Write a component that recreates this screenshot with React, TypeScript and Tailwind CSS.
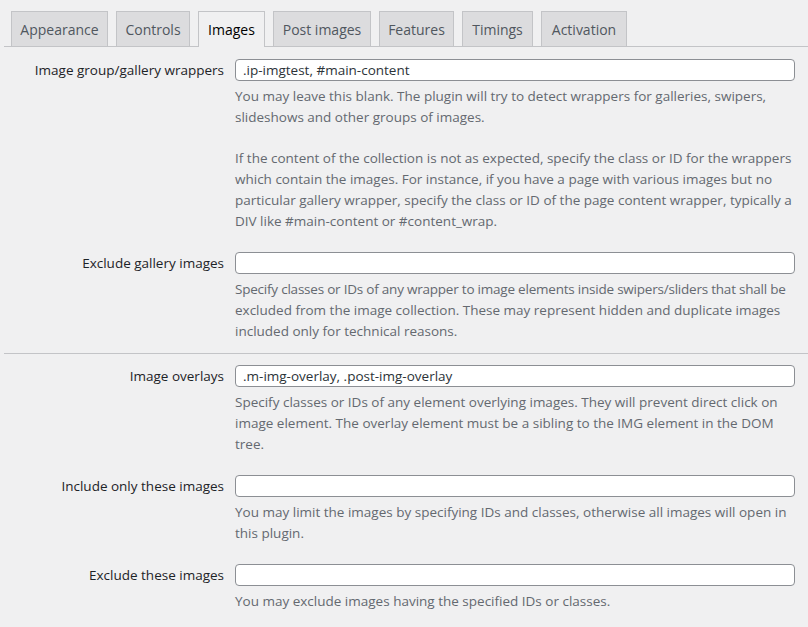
import React from 'react';

const tabs = [
  { label: 'Appearance', w: 'w-[97px]' },
  { label: 'Controls', w: 'w-[74px]' },
  { label: 'Images', w: 'w-[67px]', active: true },
  { label: 'Post images', w: 'w-[98px]' },
  { label: 'Features', w: 'w-[75px]' },
  { label: 'Timings', w: 'w-[71px]' },
  { label: 'Activation', w: 'w-[86px]' },
];

interface FieldProps {
  label: string;
  value?: string;
  lines: (string | null)[];
  tightLine?: number;
  className?: string;
}

// one settings row: right aligned label, input, description below
function Field({ label, value = '', lines, tightLine = -1, className = '' }: FieldProps) {
  return (
    <div className={`grid grid-cols-[235px_minmax(0,1fr)] ${className}`}>
      <div className="h-[22px] flex items-center justify-end pr-[11px] text-[#1d2327] whitespace-nowrap">
        {label}
      </div>
      <div className="pr-[13px] min-w-0">
        <input
          type="text"
          defaultValue={value}
          className="block w-full h-[22px] bg-white border border-[#8c8f94] rounded-[4px] px-[7px] text-[#2c3338] outline-none"
          style={{ font: 'inherit' }}
        />
        <div className="mt-[5px] text-[#646970] leading-[21px]">
          {lines.map((l, i) =>
            l === null ? (
              <div key={i} className="h-[20px]" />
            ) : (
              <div key={i} className={i === tightLine ? 'whitespace-nowrap tracking-[-0.22px]' : 'whitespace-nowrap'}>
                {l}
              </div>
            )
          )}
        </div>
      </div>
    </div>
  );
}

export default function App() {
  return (
    <div
      className="min-h-screen w-[808px] bg-[#f0f0f1] pt-[11px] text-[13.5px] overflow-hidden"
      style={{ fontFamily: '"Segoe UI", "Open Sans", "Noto Sans", sans-serif' }}
    >
      {/* tab bar */}
      <nav className="ml-[4px] pl-[7px] flex items-end gap-[8px] border-b border-[#c3c4c7] h-[36px]">
        {tabs.map(t => (
          <div
            key={t.label}
            className={
              t.active
                ? `${t.w} h-[36px] -mb-px pb-[1px] flex items-center justify-center border border-b-0 border-[#c3c4c7] bg-[#f0f0f1] text-black text-[14px]`
                : `${t.w} h-[35px] flex items-center justify-center border border-b-0 border-[#c3c4c7] bg-[#dcdcde] text-[#50575e] text-[14px]`
            }
          >
            {t.label}
          </div>
        ))}
      </nav>

      <div className="pt-[12px]">
        <Field
          label="Image group/gallery wrappers"
          value=".ip-imgtest, #main-content"
          lines={[
            'You may leave this blank. The plugin will try to detect wrappers for galleries, swipers,',
            'slideshows and other groups of images.',
            null,
            'If the content of the collection is not as expected, specify the class or ID for the wrappers',
            'which contain the images. For instance, if you have a page with various images but no',
            'particular gallery wrapper, specify the class or ID of the page content wrapper, typically a',
            'DIV like #main-content or #content_wrap.',
          ]}
        />
        <Field
          className="mt-[20px]"
          label="Exclude gallery images"
          tightLine={0}
          lines={[
            'Specify classes or IDs of any wrapper to image elements inside swipers/sliders that shall be',
            'excluded from the image collection. These may represent hidden and duplicate images',
            'included only for technical reasons.',
          ]}
        />

        <hr className="ml-[4px] mt-[11px] mb-[11px] border-0 border-t border-[#c3c4c7]" />

        <Field
          label="Image overlays"
          value=".m-img-overlay, .post-img-overlay"
          lines={[
            'Specify classes or IDs of any element overlying images. They will prevent direct click on',
            'image element. The overlay element must be a sibling to the IMG element in the DOM',
            'tree.',
          ]}
        />
        <Field
          className="mt-[20px]"
          label="Include only these images"
          lines={[
            'You may limit the images by specifying IDs and classes, otherwise all images will open in',
            'this plugin.',
          ]}
        />
        <Field
          className="mt-[20px]"
          label="Exclude these images"
          lines={['You may exclude images having the specified IDs or classes.']}
        />
      </div>
    </div>
  );
}
